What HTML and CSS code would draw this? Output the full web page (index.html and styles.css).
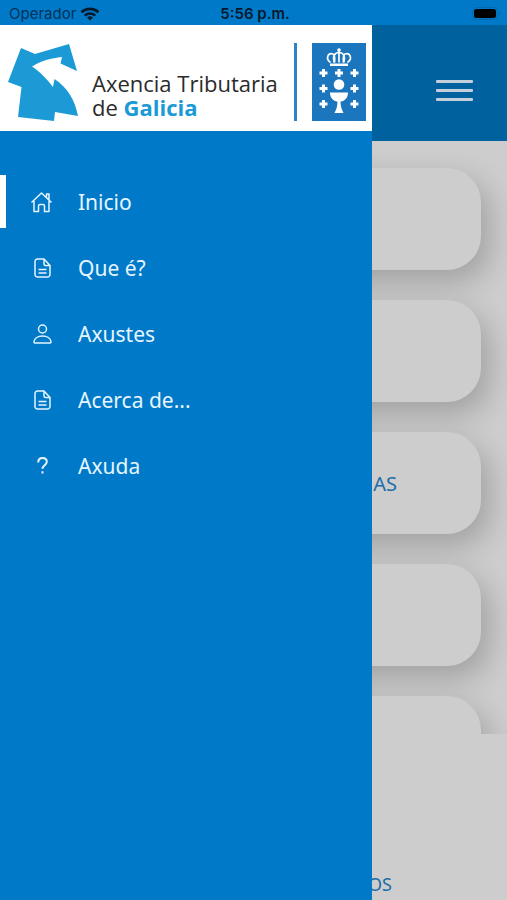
FILE: index.html
```
<!DOCTYPE html>
<html lang="gl">
  <head>
    <meta charset="utf-8" />
    <meta name="viewport" content="width=device-width, initial-scale=1" />
    <title>Axencia Tributaria de Galicia</title>
    <link rel="stylesheet" href="styles.css" />
  </head>
  <body>
    <div class="status-bar">
      <div class="carrier">
        <span>Operador</span>
        <svg class="wifi" viewBox="0 0 20 14" fill="none" stroke="currentColor" stroke-width="2.6">
          <path d="M1.5 5.2a12.4 12.4 0 0 1 17 0" />
          <path d="M4.7 8.6a7.8 7.8 0 0 1 10.6 0" />
          <path d="M10 13.6 7 10.6a4.4 4.4 0 0 1 6 0z" fill="currentColor" stroke="none" />
        </svg>
      </div>
      <span class="time">5:56 p.m.</span>
      <svg class="battery" viewBox="0 0 29 14">
        <rect x="0.5" y="0.5" width="25" height="12" rx="4" fill="none" stroke="#0069ad" />
        <rect x="2" y="2" width="22" height="9" rx="2.5" />
        <path d="M27 4.5c1.6.6 1.6 3.4 0 4z" fill="#0069ad" />
      </svg>
    </div>

    <div class="screen">
      <header class="top-bar">
        <button class="menu-button" aria-label="Menú">
          <span></span>
          <span></span>
          <span></span>
        </button>
      </header>

      <main class="card-list">
        <button class="card"></button>
        <button class="card"></button>
        <button class="card">AS</button>
        <button class="card"></button>
        <button class="card"></button>
      </main>

      <footer class="bottom-bar">
        <a href="#">OS</a>
      </footer>

      <aside class="drawer">
        <div class="brand">
          <svg class="brand-mark" viewBox="0 0 70 77">
            <path
              fill="#1c9ad6"
              d="M13 4 27 10 61 0 69 27 52.500 19.500 54 13C43 14 33 17 24 22.500 31 27 39 35 45 43L46.500 35C59 43 67 56 70 72L47 68 46 77 10 73 13.500 43 0 38z" />
          </svg>
          <p class="brand-name">Axencia Tributaria<br />de <b>Galicia</b></p>
          <span class="brand-divider"></span>
          <svg class="brand-shield" viewBox="0 0 54 78">
            <rect width="54" height="78" fill="#1c76bd" />
            <g fill="none" stroke="#fff" stroke-width="1.700">
              <path d="M18.500 19.500C13 15.500 16 9.500 21 11c2 .8 2 4 1.500 8.500" />
              <path d="M35.500 19.500C41 15.500 38 9.500 33 11c-2 .8-2 4-1.500 8.500" />
              <path d="M22.500 19.500C20 13 23 9.500 27 9.500s7 3.500 4.500 10M27 8v11.500" />
            </g>
            <g fill="#fff">
              <circle cx="27" cy="7" r="1.800" />
              <path d="M18 20.500h18v2.500H18z" />
              <circle cx="27" cy="41.500" r="5.300" />
              <path d="M18 49.500h18c0 5-3 8.500-7.500 9.300.2 4.200.8 7.200 3 11.200h-9c2.200-4 2.800-7 3-11.200C21 58 18 54.500 18 49.500z" />
            </g>
            <g stroke="#fff" stroke-width="3">
              <path d="M7.500 30h8M11.500 26v8M23 30h8M27 26v8M38.500 30h8M42.500 26v8" />
              <path d="M7.500 45.500h8M11.500 41.500v8M38.500 45.500h8M42.500 41.500v8" />
              <path d="M7.500 61h8M11.500 57v8M38.500 61h8M42.500 57v8" />
            </g>
          </svg>
        </div>

        <nav class="menu">
          <a class="menu-item active" href="#">
            <svg viewBox="0 0 24 24">
              <path d="M1.500 12.500 11.500 3l10 9.500M16.500 7.500V4H19v6M4 11v10.500h4.500V16a1.500 1.500 0 0 1 1.500-1.500h3a1.500 1.500 0 0 1 1.500 1.500v5.500H19V11" />
            </svg>
            <span>Inicio</span>
          </a>
          <a class="menu-item" href="#">
            <svg viewBox="0 0 24 24">
              <path d="M14 3H7.500A2.500 2.500 0 0 0 5 5.500v13A2.500 2.500 0 0 0 7.500 21h10a2.500 2.500 0 0 0 2.500-2.500V9.500L14 3v5a1.500 1.500 0 0 0 1.500 1.500H20M8.500 13.500h8M8.500 17h8" />
            </svg>
            <span>Que é?</span>
          </a>
          <a class="menu-item" href="#">
            <svg viewBox="0 0 24 24">
              <circle cx="12.500" cy="7" r="4" />
              <path d="M12.500 14c-4.500 0-8 2.200-8.500 5.500-.1 1 .5 1.500 1.500 1.500h14c1 0 1.600-.5 1.500-1.500-.5-3.300-4-5.500-8.500-5.500z" />
            </svg>
            <span>Axustes</span>
          </a>
          <a class="menu-item" href="#">
            <svg viewBox="0 0 24 24">
              <path d="M14 3H7.500A2.500 2.500 0 0 0 5 5.500v13A2.500 2.500 0 0 0 7.500 21h10a2.500 2.500 0 0 0 2.500-2.500V9.500L14 3v5a1.500 1.500 0 0 0 1.500 1.500H20M8.500 13.500h8M8.500 17h8" />
            </svg>
            <span>Acerca de...</span>
          </a>
          <a class="menu-item" href="#">
            <svg class="help" viewBox="0 0 24 24">
              <path d="M8.200 8.500C8.200 5.500 10 4 12.500 4s4.300 1.500 4.300 3.800c0 3.400-4.300 3.500-4.300 7M12.500 17.300v2.200" />
            </svg>
            <span>Axuda</span>
          </a>
        </nav>
      </aside>
    </div>
  </body>
</html>
```
FILE: styles.css
```
*,
*::after,
*::before {
  margin: 0;
  padding: 0;
  box-sizing: border-box;
}

body {
  display: flex;
  flex-direction: column;
  min-height: 100vh;
  background-color: #cdcdcd;
  font-family: "Noto Sans", sans-serif;
}

a {
  color: inherit;
  text-decoration: none;
}

button {
  border: none;
  font: inherit;
}

.status-bar {
  display: grid;
  grid-template-columns: 1fr auto 1fr;
  align-items: center;
  height: 25px;
  padding: 2px 6px 0 9px;
  background-color: #007ac8;
  color: #06192b;
  font-family: Inter, sans-serif;
  font-size: 15px;
}

.carrier {
  display: flex;
  align-items: center;
  gap: 4px;
  color: #003156;
}

.wifi {
  width: 20px;
  height: 14px;
  color: #06192b;
}

.time {
  font-weight: 600;
}

.battery {
  justify-self: end;
  width: 29px;
  height: 14px;
}

.screen {
  position: relative;
  flex: 1;
  display: flex;
  flex-direction: column;
}

.top-bar {
  display: flex;
  align-items: center;
  justify-content: flex-end;
  height: 116px;
  padding: 14px 34px 0;
  background-color: #00619f;
}

.menu-button {
  display: flex;
  flex-direction: column;
  gap: 6px;
  width: 37px;
  background: none;
}

.menu-button span {
  height: 3px;
  border-radius: 1px;
  background-color: #c3cfdb;
}

.card-list {
  flex: 1 1 0;
  display: flex;
  flex-direction: column;
  gap: 30px;
  padding: 27px 26px 0;
  overflow: hidden;
}

.card {
  flex: none;
  height: 102px;
  padding-right: 84px;
  border-radius: 34px;
  background-color: #cdcdcd;
  box-shadow: 8px 12px 30px rgba(0, 0, 0, 0.22);
  color: #1b6ea8;
  font-size: 20px;
  text-align: right;
}

.bottom-bar {
  display: flex;
  align-items: flex-end;
  justify-content: flex-end;
  height: 166px;
  padding: 0 115px 4px;
  color: #1b6ea8;
  font-size: 18px;
}

/* drawer slides over the whole screen below the status bar */
.drawer {
  position: absolute;
  top: 0;
  bottom: 0;
  left: 0;
  width: 372px;
  max-width: 80%;
  background-color: #007ac8;
}

.brand {
  display: flex;
  align-items: center;
  height: 106px;
  padding: 8px 6px 0 8px;
  background-color: #fff;
}

.brand-mark {
  flex: none;
  width: 70px;
  height: 77px;
}

.brand-name {
  flex: 1;
  margin-left: 14px;
  padding-top: 26px;
  color: #2b2b2b;
  font-family: "Open Sans", sans-serif;
  font-size: 22px;
  line-height: 24px;
  white-space: nowrap;
}

.brand-name b {
  color: #1c9ad6;
}

.brand-divider {
  flex: none;
  width: 3px;
  height: 78px;
  margin-right: 15px;
  background-color: #2f83c3;
}

.brand-shield {
  flex: none;
  width: 54px;
  height: 78px;
}

.menu {
  display: flex;
  flex-direction: column;
  gap: 13px;
  padding-top: 44px;
}

.menu-item {
  display: flex;
  align-items: center;
  gap: 24px;
  height: 53px;
  padding-left: 24px;
  border-left: 6px solid transparent;
  color: #e6f5ff;
  font-size: 21px;
}

.menu-item.active {
  border-left-color: #fff;
}

.menu-item svg {
  width: 24px;
  height: 24px;
  fill: none;
  stroke: currentColor;
  stroke-width: 1.5;
  stroke-linejoin: round;
}

.menu-item .help {
  stroke-width: 2;
}
```
